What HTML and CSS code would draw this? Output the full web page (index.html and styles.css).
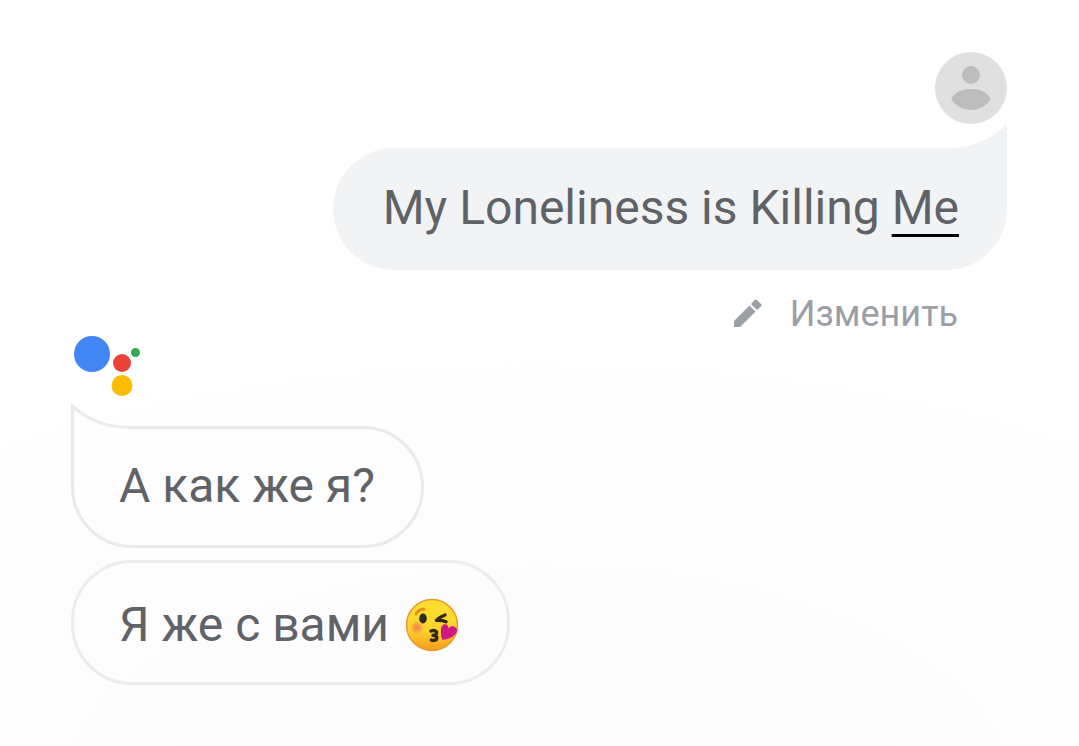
FILE: index.html
```html
<!DOCTYPE html>
<html lang="ru">
<head>
  <meta charset="UTF-8">
  <title>Assistant</title>
  <meta name="viewport" content="width=device-width, initial-scale=1.0">
  <link rel="stylesheet" href="styles.css">
</head>
<body>
<main class="chat">

  <!-- User -->
  <section class="turn user">
    <svg class="avatar" viewBox="0 0 72 72" role="img" aria-label="User">
      <circle cx="36" cy="36" r="36" fill="#e0e0e0"/>
      <circle cx="36" cy="23" r="9" fill="#bdbdbd"/>
      <path d="M17 45.500C21 39.500 28 37 36 37s15 2.500 19 8.500c.8 1.200.7 2.300-.2 3.300C50 54.500 43.500 58 36 58s-14-3.500-18.800-9.200c-.9-1-1-2.100-.2-3.300z" fill="#bdbdbd"/>
    </svg>
    <p class="bubble query">
      <svg class="tail" viewBox="0 0 60 24" aria-hidden="true">
        <path d="M0 24C24 24 44 16 60 0V24z" fill="#f1f3f4"/>
      </svg>
      My Loneliness is Killing <span class="marked">Me</span>
    </p>
    <button class="edit" type="button">
      <svg class="pencil" viewBox="0 0 28 28" aria-hidden="true">
        <path d="M0 22V28H6L21.500 12.500L15.500 6.500zM17 5L23 11L27 7.500c.8-.8.8-1.700 0-2.500L23 1c-.8-.8-1.700-.8-2.500 0z" fill="currentColor"/>
      </svg>
      Изменить
    </button>
  </section>

  <!-- Assistant -->
  <section class="turn assistant">
    <svg class="logo" viewBox="0 0 68 60" role="img" aria-label="Assistant">
      <circle cx="20" cy="18" r="18" fill="#4285f4"/>
      <circle cx="50" cy="27" r="9" fill="#ea4335"/>
      <circle cx="50" cy="49.500" r="10.500" fill="#fbbc04"/>
      <circle cx="63.500" cy="16.500" r="4.500" fill="#34a853"/>
    </svg>
    <p class="bubble reply first">
      <svg class="tail" viewBox="0 0 60 27" aria-hidden="true">
        <path d="M1.500 27V4C16 18 36 25.500 60 25.500V27z" fill="#fefefe"/>
        <path d="M1.500 27V4C16 18 36 25.500 60 25.500" fill="none" stroke="#e8eaed" stroke-width="3"/>
      </svg>
      А как же я?
    </p>
    <p class="bubble reply last">
      Я же с вами
      <svg class="emoji" viewBox="0 0 54 54" role="img" aria-label="😘">
        <defs>
          <linearGradient id="face" x1="0" y1="0" x2="0" y2="1">
            <stop offset="0" stop-color="#fde030"/>
            <stop offset="0.600" stop-color="#fcd32c"/>
            <stop offset="1" stop-color="#f79a1e"/>
          </linearGradient>
          <radialGradient id="cheek">
            <stop offset="0" stop-color="#f28a50"/>
            <stop offset="0.400" stop-color="#f28a50" stop-opacity="0.800"/>
            <stop offset="1" stop-color="#f28a50" stop-opacity="0"/>
          </radialGradient>
        </defs>
        <circle cx="27" cy="27" r="25.500" fill="url(#face)" stroke="#e59a2c" stroke-width="1.500"/>
        <circle cx="12" cy="29.500" r="7" fill="url(#cheek)"/>
        <path d="M11 16c1.500-3 4.500-5 8-4.800" fill="none" stroke="#e3921e" stroke-width="3" stroke-linecap="round"/>
        <ellipse cx="18" cy="20.500" rx="3.800" ry="5" fill="#2f2a16"/>
        <path d="M40 17C37 18 34 20 31.500 22.300C35 22 38 22.300 41 23.800" fill="none" stroke="#2f2a16" stroke-width="3.400" stroke-linecap="round" stroke-linejoin="round"/>
        <path d="M26 33c3-1 6-.2 5.600 2-.3 1.500-2 2.200-3.600 2.400 2.200 0 4 .9 3.900 2.600-.2 2.300-3 3-5.600 2" fill="none" stroke="#2f2a16" stroke-width="3.400" stroke-linecap="round" stroke-linejoin="round"/>
        <path d="M37.500 42C36 38.500 35.600 34.500 36 31c.4-3.200 2-4.800 4-4.700 2.200.1 3.300 1.700 3.400 4 1.600-1.800 4-2.500 6-1.500 2.600 1.200 3.400 3.700 2 6-2.200 3.600-7.500 6.400-13.900 7.200z" fill="#d01884"/>
      </svg>
    </p>
  </section>

</main>
</body>
</html>
```

FILE: styles.css
```css
* { box-sizing: border-box; }
body {
  margin: 0;
  min-height: 100vh;
  font-family: Roboto, sans-serif;
  color: #5f6368;
  background: radial-gradient(ellipse 90% 60% at 50% 105%, #fcfcfc 0%, #fdfdfd 70%, #fff 100%) #fff;
}
.chat { padding: 52px 72px 60px 71px; }
.turn { display: flex; flex-direction: column; }
.user { align-items: flex-end; }
.assistant { align-items: flex-start; }

.avatar { width: 72px; height: 72px; margin-bottom: 24px; }
.logo { width: 68px; height: 60px; margin: 0 0 30px 1px; }

.bubble {
  position: relative;
  margin: 0;
  border-radius: 61px;
  font-size: 48px;
  line-height: 56px;
}
.query {
  padding: 32px 48px 34px 50px;
  background: #f1f3f4;
  border-top-right-radius: 0;
}
.query .tail { position: absolute; right: 0; bottom: 100%; width: 60px; height: 24px; }
.marked {
  text-decoration: underline 3px #000;
  text-underline-offset: 10px;
  text-decoration-skip-ink: none;
}

.edit {
  display: flex;
  align-items: center;
  gap: 28px;
  margin: 23px 49px 0 0;
  padding: 0;
  border: 0;
  background: none;
  color: #9aa0a6;
  font: 36px/43px Roboto, sans-serif;
  cursor: pointer;
}
.pencil { width: 28px; height: 28px; margin-bottom: 4px; }

.reply { padding: 29px 46px 31px 45px; border: 3px solid #e8eaed; }
.first { border-top-left-radius: 0; }
.first .tail { position: absolute; left: -3px; top: -27px; width: 60px; height: 27px; }
.last { margin-top: 12px; padding: 34px 48px 29px 45px; border-color: #ececec; }
.emoji { width: 54px; height: 54px; margin-left: 4px; vertical-align: -11px; }
```
